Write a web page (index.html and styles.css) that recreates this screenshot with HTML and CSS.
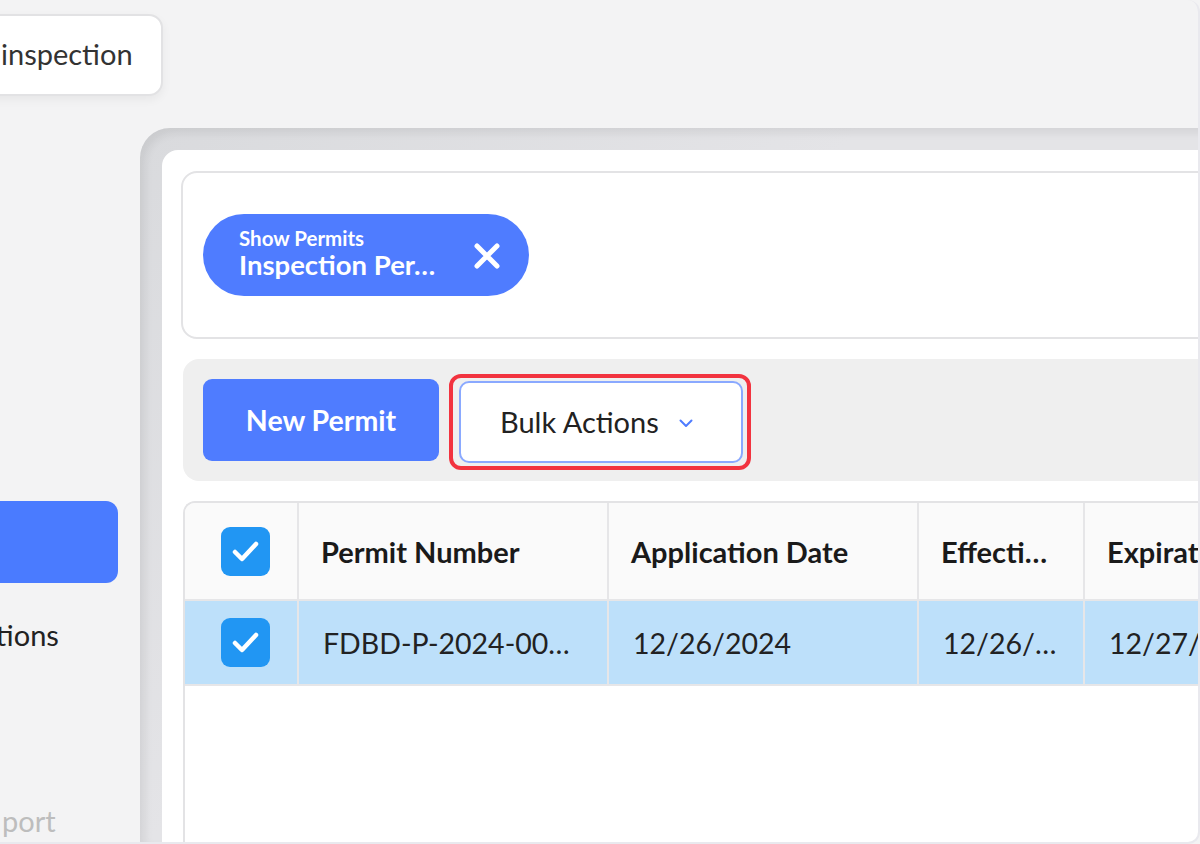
FILE: index.html
```html
<!DOCTYPE html>
<html lang="en">
<head>
<meta charset="utf-8">
<title>Permits</title>
<link rel="stylesheet" href="styles.css">
</head>
<body>
<div class="frame">
  <div class="topbar">
    <div class="top-card">inspection</div>
  </div>
  <div class="main">
    <aside class="sidebar">
      <div class="nav-active"></div>
      <div class="nav-item">ctions</div>
      <div class="nav-spacer"></div>
      <div class="nav-muted">port</div>
    </aside>
    <section class="panel">
      <div class="panel-inner">
        <div class="filter-card">
          <div class="chip">
            <div class="chip-text">
              <span class="chip-label">Show Permits</span>
              <span class="chip-value">Inspection Per…</span>
            </div>
            <svg class="chip-x" width="28" height="28" viewBox="0 0 28 28"><path d="M4 4 L24 24 M24 4 L4 24" stroke="#fff" stroke-width="5" stroke-linecap="round"/></svg>
          </div>
        </div>
        <div class="toolbar">
          <button class="btn-primary">New Permit</button>
          <div class="highlight">
            <button class="btn-bulk">Bulk Actions
              <svg class="chev" width="14" height="9" viewBox="0 0 14 9"><path d="M1.5 1.5 L7 7 L12.5 1.5" fill="none" stroke="#4f7cff" stroke-width="2" stroke-linecap="round" stroke-linejoin="round"/></svg>
            </button>
          </div>
        </div>
        <div class="table">
          <div class="row head">
            <div class="cell cb-cell"><span class="cb"><svg width="49" height="49" viewBox="0 0 49 49"><path d="M14 25 L21 32 L35 17" fill="none" stroke="#fff" stroke-width="4.5" stroke-linecap="round" stroke-linejoin="round"/></svg></span></div>
            <div class="cell">Permit Number</div>
            <div class="cell">Application Date</div>
            <div class="cell">Effecti…</div>
            <div class="cell">Expiration Date</div>
          </div>
          <div class="row body sel">
            <div class="cell cb-cell"><span class="cb"><svg width="49" height="49" viewBox="0 0 49 49"><path d="M14 25 L21 32 L35 17" fill="none" stroke="#fff" stroke-width="4.5" stroke-linecap="round" stroke-linejoin="round"/></svg></span></div>
            <div class="cell">FDBD-P-2024-00…</div>
            <div class="cell">12/26/2024</div>
            <div class="cell">12/26/…</div>
            <div class="cell">12/27/2025</div>
          </div>
        </div>
      </div>
    </section>
  </div>
</div>
</body>
</html>
```
FILE: styles.css
```css
* { box-sizing: border-box; }
html, body { margin: 0; padding: 0; background: #f3f3f4; }
body { font-family: Lato, "Liberation Sans", sans-serif; color: #222; }

.frame {
  width: 1200px;
  height: 844px;
  overflow: hidden;
  background: #f3f3f4;
  border-right: 2px solid #e9e9ee;
  border-bottom: 2px solid #e9e9ee;
  border-radius: 0 12px 12px 0;
  display: flex;
  flex-direction: column;
}

.topbar { height: 128px; padding-top: 14px; flex: none; }
.top-card {
  width: 183px;
  height: 82px;
  margin-left: -20px;
  padding-left: 19px;
  padding-bottom: 4px;
  background: #fff;
  border: 2px solid #e2e2e4;
  border-radius: 14px;
  box-shadow: 0 4px 10px rgba(0,0,0,0.05);
  font-size: 29px;
  color: #333;
  display: flex;
  align-items: center;
}

.main { flex: 1; display: flex; min-height: 0; }

.sidebar {
  width: 140px;
  flex: none;
  padding-top: 373px;
  display: flex;
  flex-direction: column;
}
.nav-active {
  width: 138px;
  height: 82px;
  margin-left: -20px;
  background: #4a7bff;
  border-radius: 12px;
}
.nav-item {
  margin-top: 34px;
  margin-left: -18px;
  font-size: 29px;
  color: #222;
  white-space: nowrap;
}
.nav-spacer { flex: 1; }
.nav-muted {
  margin-left: 2px;
  margin-bottom: 4px;
  font-size: 29px;
  color: #bdbdbd;
}

.panel {
  flex: none;
  width: 1100px;
  padding: 22px 0 0 22px;
  background: linear-gradient(135deg, #d9dadd 0%, #e4e4e7 40%);
  border-radius: 30px 0 0 0;
  box-shadow: inset 5px 5px 8px rgba(0,0,0,0.07);
  display: flex;
}
.panel-inner {
  flex: 1;
  background: #fff;
  border-radius: 16px 0 0 0;
  padding: 21px 0 0 19px;
  display: flex;
  flex-direction: column;
}

.filter-card {
  height: 168px;
  border: 2px solid #e3e3e5;
  border-radius: 16px;
  padding: 41px 0 0 20px;
}
.chip {
  width: 326px;
  height: 82px;
  background: #4f7cff;
  border-radius: 41px;
  display: flex;
  align-items: center;
  padding: 0 28px 0 36px;
  justify-content: space-between;
}
.chip-text { display: flex; flex-direction: column; color: #fff; margin-top: -2px; }
.chip-label { font-size: 20.5px; font-weight: 700; line-height: 22px; }
.chip-value { font-size: 27.5px; font-weight: 700; line-height: 32px; }
.chip-x { flex: none; margin-top: 2px; }

.toolbar {
  margin-top: 20px;
  margin-left: 2px;
  height: 122px;
  background: #efefef;
  border-radius: 16px 0 0 16px;
  padding: 15px 0 0 20px;
  display: flex;
  align-items: flex-start;
  gap: 10px;
}
.btn-primary {
  margin-top: 5px;
  width: 236px;
  height: 82px;
  border: none;
  border-radius: 9px;
  background: #4f7cff;
  color: #fff;
  font-family: Lato, "Liberation Sans", sans-serif;
  font-size: 28.5px;
  font-weight: 700;
  letter-spacing: 0;
}
.highlight {
  width: 302px;
  height: 96px;
  border: 4px solid #f2333f;
  border-radius: 12px;
  padding: 3px 4px 3px 6px;
}
.btn-bulk {
  width: 100%;
  height: 100%;
  background: #fff;
  border: 2px solid #8aa9ff;
  border-radius: 10px;
  font-family: Lato, "Liberation Sans", sans-serif;
  font-size: 29px;
  color: #222;
  display: flex;
  align-items: center;
  padding-left: 39px;
  padding-bottom: 2px;
  gap: 20px;
}
.chev { margin-top: 4px; }

.table {
  margin-top: 20px;
  margin-left: 2px;
  flex: 1;
  border: 2px solid #e3e3e5;
  border-right: none;
  border-bottom: none;
  border-radius: 12px 0 0 0;
  overflow: hidden;
}
.row {
  display: grid;
  grid-template-columns: 114px 310px 310px 166px 220px;
  border-bottom: 2px solid #e6e6e8;
}
.row.head { height: 98px; background: #fafafa; font-weight: 700; }
.row.body { height: 85px; }
.row.sel { background: #bde0fa; }
.cell {
  display: flex;
  align-items: center;
  padding-left: 22px;
  font-size: 29px;
  white-space: nowrap;
  overflow: hidden;
  border-right: 2px solid #e6e6e8;
  color: #1a1a1a;
}
.row.body .cell { padding-left: 24px; font-weight: 400; color: #222; font-size: 28.5px; }
.row .cell:last-child { border-right: none; }
.cb-cell { padding-left: 36px; }
.row.body .cb-cell { padding-left: 36px; }
.cb {
  width: 49px;
  height: 49px;
  border-radius: 9px;
  background: #2196f3;
  display: block;
}
.cb svg { display: block; }
```
